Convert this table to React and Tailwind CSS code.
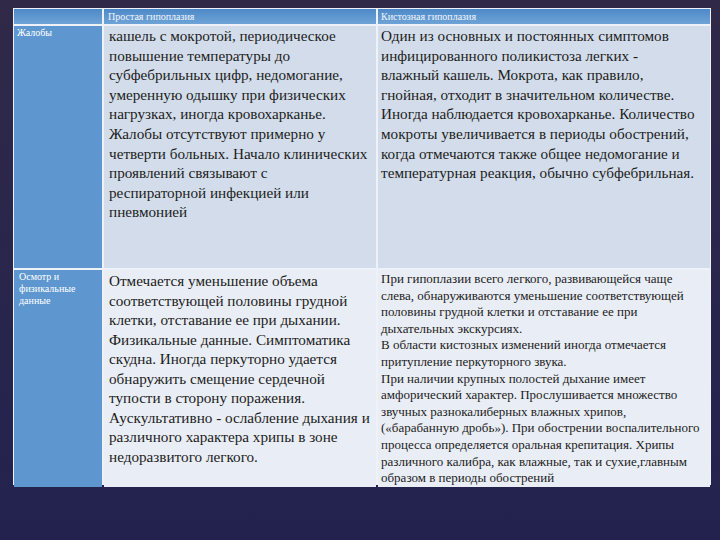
import React from "react";

const row1Simple = [
  "кашель с мокротой, периодическое",
  "повышение температуры до",
  "субфебрильных цифр, недомогание,",
  "умеренную одышку при физических",
  "нагрузках, иногда кровохарканье.",
  "Жалобы отсутствуют примерно у",
  "четверти больных. Начало клинических",
  "проявлений связывают с",
  "респираторной инфекцией или",
  "пневмонией",
];

const row1Cyst = [
  "Один из основных и постоянных симптомов",
  "инфицированного поликистоза легких -",
  "влажный кашель. Мокрота, как правило,",
  "гнойная, отходит в значительном количестве.",
  "Иногда наблюдается кровохарканье. Количество",
  "мокроты увеличивается в периоды обострений,",
  "когда отмечаются также общее недомогание и",
  "температурная реакция, обычно субфебрильная.",
];

const row2Simple = [
  "Отмечается уменьшение объема",
  "соответствующей половины грудной",
  "клетки, отставание ее при дыхании.",
  "Физикальные данные. Симптоматика",
  "скудна. Иногда перкуторно удается",
  "обнаружить смещение сердечной",
  "тупости в сторону поражения.",
  "Аускультативно - ослабление дыхания и",
  "различного характера хрипы в зоне",
  "недоразвитого легкого.",
];

const row2Cyst = [
  "При гипоплазии всего легкого, развивающейся чаще",
  "слева, обнаруживаются уменьшение соответствующей",
  "половины грудной клетки и отставание ее при",
  "дыхательных экскурсиях.",
  "В области кистозных изменений иногда отмечается",
  "притупление перкуторного звука.",
  "При наличии крупных полостей дыхание имеет",
  "амфорический характер. Прослушивается множество",
  "звучных разнокалиберных влажных хрипов,",
  "(«барабанную дробь»). При обострении воспалительного",
  "процесса определяется оральная крепитация. Хрипы",
  "различного калибра, как влажные, так и сухие,главным",
  "образом в периоды обострений",
];

const Lines = ({ lines }) =>
  lines.map((line, i) => (
    <div key={i} className="whitespace-nowrap">
      {line}
    </div>
  ));

export default function App() {
  return (
    <div className="w-[720px] h-[540px] overflow-hidden bg-gradient-to-b from-[#302948] to-[#23224f] [font-family:'Liberation_Serif',serif]">
      <div className="ml-[13px] mt-[8px] w-[698px] h-[477px] bg-[#eef2f8] p-px grid grid-cols-[88px_272px_1fr] grid-rows-[15px_242px_1fr] gap-[2px]">
        {/* header */}
        <div className="bg-gradient-to-b from-[#4d89c8] to-[#6ea3d6]" />
        <div className="bg-gradient-to-b from-[#4d89c8] to-[#6ea3d6] pl-[4px] text-[10px] leading-[15px] text-[#f2f6fb]">
          Простая гипоплазия
        </div>
        <div className="bg-gradient-to-b from-[#4d89c8] to-[#6ea3d6] pl-[3px] text-[10px] leading-[15px] text-[#f2f6fb]">
          Кистозная гипоплазия
        </div>

        {/* row 1 */}
        <div className="bg-[#5e97cf] pl-[3px] pt-px text-[10px] leading-[12px] text-white">
          Жалобы
        </div>
        <div className="bg-[#d3dcea] pl-[5px] text-[15.2px] leading-[19.6px] text-[#1c1c1c]">
          <Lines lines={row1Simple} />
        </div>
        <div className="bg-[#d3dcea] pl-[3px] text-[15.2px] leading-[19.6px] text-[#1c1c1c]">
          <Lines lines={row1Cyst} />
        </div>

        {/* row 2 */}
        <div className="bg-[#5e97cf] pl-[5px] pt-[1px] text-[10px] leading-[12px] text-white">
          <div>Осмотр и</div>
          <div>физикальные</div>
          <div>данные</div>
        </div>
        <div className="bg-[#e9edf5] pl-[5px] pt-[1px] text-[15.2px] leading-[19.5px] text-[#1c1c1c]">
          <Lines lines={row2Simple} />
        </div>
        <div className="bg-[#e9edf5] pl-[3px] pt-px text-[13px] leading-[16.6px] text-[#1c1c1c]">
          <Lines lines={row2Cyst} />
        </div>
      </div>
    </div>
  );
}
